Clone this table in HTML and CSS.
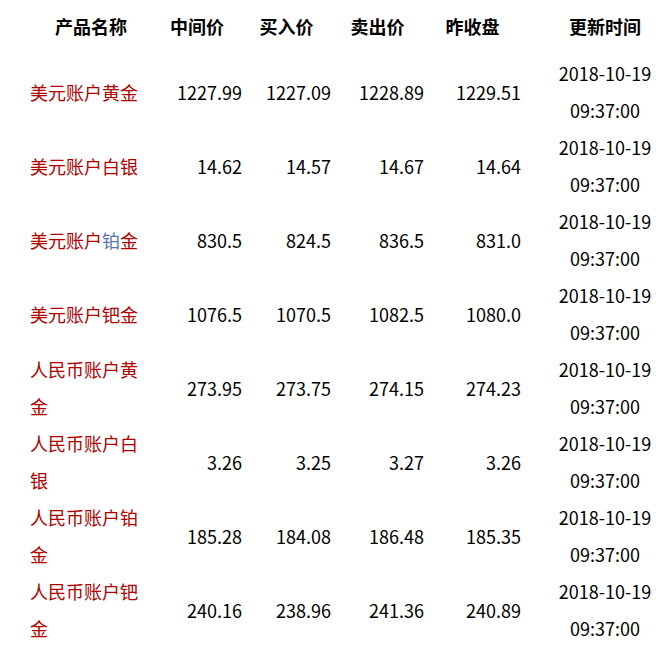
FILE: index.html
```html
<!DOCTYPE html>
<html lang="zh-CN">
<head>
<meta charset="utf-8">
<title>贵金属行情</title>
<link rel="stylesheet" href="styles.css">
</head>
<body>
<table class="quotes">
  <thead>
    <tr>
      <th class="c-name">产品名称</th>
      <th class="c-mid">中间价</th>
      <th class="c-buy">买入价</th>
      <th class="c-sell">卖出价</th>
      <th class="c-close">昨收盘</th>
      <th class="c-time">更新时间</th>
    </tr>
  </thead>
  <tbody>
    <tr>
      <td class="name">美元账户黄金</td>
      <td class="num">1227.99</td><td class="num">1227.09</td><td class="num">1228.89</td><td class="num">1229.51</td>
      <td class="time">2018-10-19<br>09:37:00</td>
    </tr>
    <tr>
      <td class="name">美元账户白银</td>
      <td class="num">14.62</td><td class="num">14.57</td><td class="num">14.67</td><td class="num">14.64</td>
      <td class="time">2018-10-19<br>09:37:00</td>
    </tr>
    <tr>
      <td class="name">美元账户<span class="alt">铂</span>金</td>
      <td class="num">830.5</td><td class="num">824.5</td><td class="num">836.5</td><td class="num">831.0</td>
      <td class="time">2018-10-19<br>09:37:00</td>
    </tr>
    <tr>
      <td class="name">美元账户钯金</td>
      <td class="num">1076.5</td><td class="num">1070.5</td><td class="num">1082.5</td><td class="num">1080.0</td>
      <td class="time">2018-10-19<br>09:37:00</td>
    </tr>
    <tr>
      <td class="name">人民币账户黄金</td>
      <td class="num">273.95</td><td class="num">273.75</td><td class="num">274.15</td><td class="num">274.23</td>
      <td class="time">2018-10-19<br>09:37:00</td>
    </tr>
    <tr>
      <td class="name">人民币账户白银</td>
      <td class="num">3.26</td><td class="num">3.25</td><td class="num">3.27</td><td class="num">3.26</td>
      <td class="time">2018-10-19<br>09:37:00</td>
    </tr>
    <tr>
      <td class="name">人民币账户铂金</td>
      <td class="num">185.28</td><td class="num">184.08</td><td class="num">186.48</td><td class="num">185.35</td>
      <td class="time">2018-10-19<br>09:37:00</td>
    </tr>
    <tr>
      <td class="name">人民币账户钯金</td>
      <td class="num">240.16</td><td class="num">238.96</td><td class="num">241.36</td><td class="num">240.89</td>
      <td class="time">2018-10-19<br>09:37:00</td>
    </tr>
  </tbody>
</table>
</body>
</html>
```
FILE: styles.css
```css
html, body {
  margin: 0;
  padding: 0;
  background: #ffffff;
}

body {
  font-family: "Noto Sans CJK SC", "Noto Sans", sans-serif;
  font-size: 18px;
  color: #000000;
}

.quotes {
  width: 666px;
  border-collapse: collapse;
  table-layout: fixed;
}

.quotes th,
.quotes td {
  box-sizing: border-box;
  padding: 0;
  line-height: 37px;
  vertical-align: middle;
}

.quotes th {
  font-weight: bold;
  text-align: center;
  padding-top: 8px;
  padding-bottom: 10px;
  color: #000000;
}

.c-name { width: 152px; padding-left: 30px !important; }
.c-mid { width: 90px; }
.c-buy { width: 89px; }
.c-sell { width: 93px; }
.c-close { width: 97px; }
.c-time { width: 145px; padding-left: 23px !important; }

.name {
  padding-left: 30px !important;
  text-align: left;
  color: #b00000;
}

.alt {
  color: #5a74ae;
}

.num {
  text-align: right;
}

.time {
  text-align: center;
  padding-left: 23px !important;
}
```
